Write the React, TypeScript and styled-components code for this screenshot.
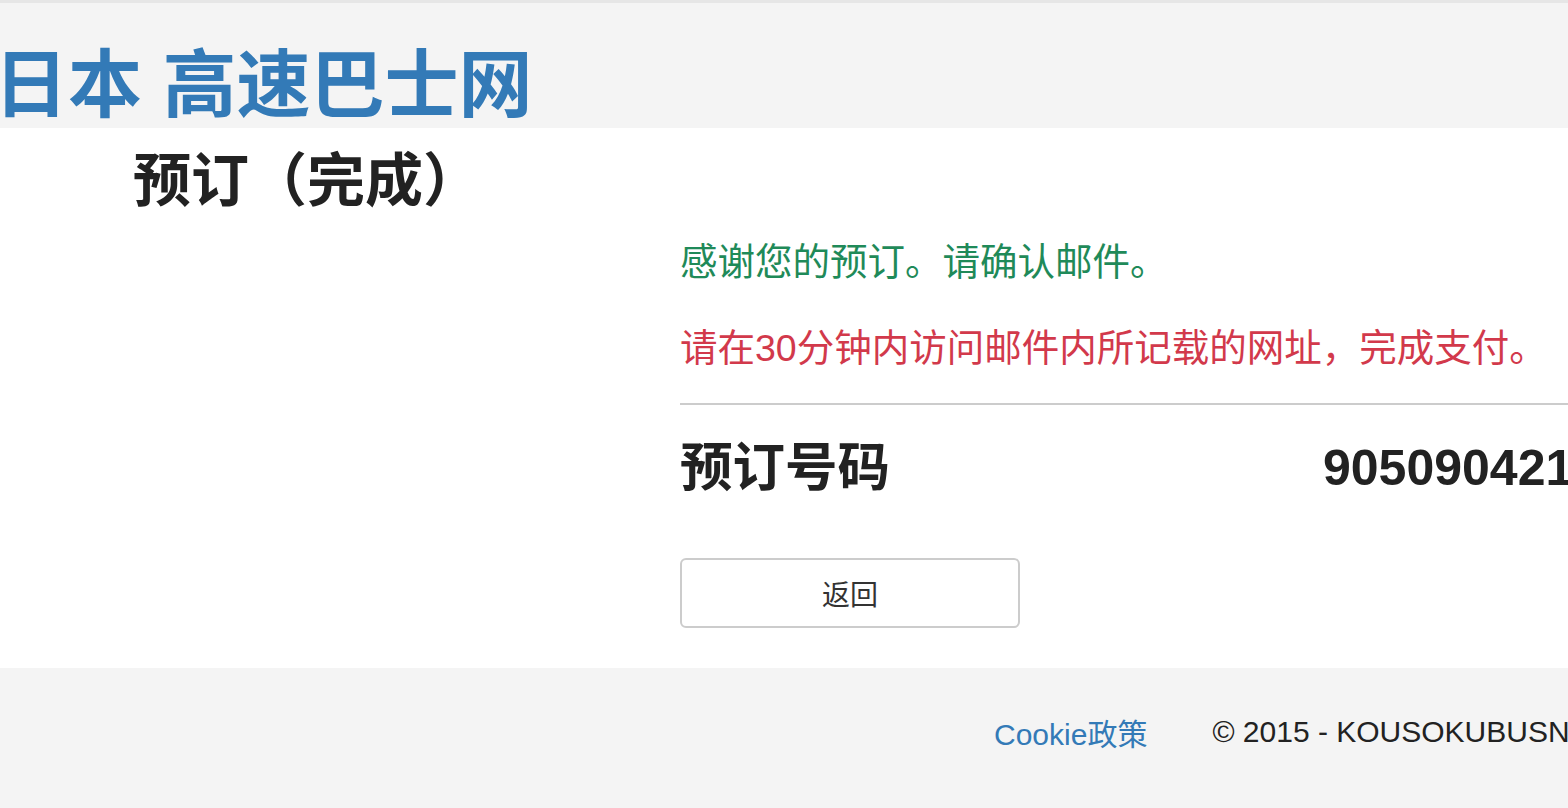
import React from "react";
import styled, { createGlobalStyle } from "styled-components";

const Global = createGlobalStyle`
  html, body {
    margin: 0;
    padding: 0;
    width: 1568px;
    height: 808px;
    overflow: hidden;
    background: #ffffff;
    font-family: "Liberation Sans", "Noto Sans CJK SC", sans-serif;
    color: #222222;
  }
  * { box-sizing: border-box; }
`;

const Page = styled.div`
  display: flex;
  flex-direction: column;
  width: 1568px;
  height: 808px;
  overflow: hidden;
`;

const Header = styled.header`
  height: 128px;
  background: #f4f4f4;
  border-top: 3px solid #e6e6e6;
  padding-top: 46px;
`;

const Brand = styled.h1`
  margin: 0 0 0 -6px;
  font-size: 74px;
  line-height: 74px;
  font-weight: 700;
  color: #337ab7;
  white-space: nowrap;
`;

const Main = styled.main`
  height: 540px;
  display: flex;
  flex-direction: column;
  padding-top: 24px;
`;

const PageTitle = styled.h2`
  margin: 0 0 0 133px;
  font-size: 58px;
  line-height: 58px;
  font-weight: 700;
  color: #222222;
  white-space: nowrap;
`;

const Content = styled.section`
  margin-left: 680px;
  width: 1000px;
  display: flex;
  flex-direction: column;
`;

const Message = styled.p<{ $tone: "success" | "danger" }>`
  margin: 0;
  font-size: 37.5px;
  line-height: 37.5px;
  white-space: nowrap;
  color: ${(p) => (p.$tone === "success" ? "#1f8a59" : "#d2394b")};
`;

const Divider = styled.hr`
  margin: 0;
  border: none;
  border-top: 2px solid #cccccc;
  height: 0;
`;

const InfoRow = styled.div`
  display: grid;
  grid-template-columns: 643px 1fr;
  align-items: center;
  white-space: nowrap;
`;

const InfoLabel = styled.div`
  font-size: 52.5px;
  line-height: 52.5px;
  font-weight: 700;
  color: #222222;
`;

const InfoValue = styled.div`
  font-size: 50px;
  line-height: 52.5px;
  font-weight: 700;
  color: #222222;
`;

const ButtonWrap = styled.div`
  margin-top: 63px;
`;

const BackButton = styled.button`
  width: 340px;
  height: 70px;
  background: #ffffff;
  border: 2px solid #cccccc;
  border-radius: 6px;
  font-family: "Liberation Sans", "Noto Sans CJK SC", sans-serif;
  font-size: 28px;
  color: #333333;
  cursor: pointer;
  padding: 0;
`;

const Footer = styled.footer`
  height: 140px;
  background: #f4f4f4;
  display: flex;
  align-items: center;
  padding-left: 994px;
  gap: 65px;
  white-space: nowrap;
  padding-bottom: 12px;
`;

const FooterLink = styled.a`
  font-size: 30px;
  color: #337ab7;
  text-decoration: none;
`;

const Copyright = styled.span`
  font-size: 30px;
  color: #222222;
`;

export default function App() {
  return (
    <>
      <Global />
      <Page>
        <Header>
          <Brand>日本 高速巴士网</Brand>
        </Header>
        <Main>
          <PageTitle>预订（完成）</PageTitle>
          <Content>
            <Message $tone="success" style={{ marginTop: 34 }}>
              感谢您的预订。请确认邮件。
            </Message>
            <Message $tone="danger" style={{ marginTop: 48 }}>
              请在30分钟内访问邮件内所记载的网址，完成支付。
            </Message>
            <Divider style={{ marginTop: 36 }} />
            <InfoRow style={{ marginTop: 37 }}>
              <InfoLabel>预订号码</InfoLabel>
              <InfoValue>905090421</InfoValue>
            </InfoRow>
            <ButtonWrap>
              <BackButton>返回</BackButton>
            </ButtonWrap>
          </Content>
        </Main>
        <Footer>
          <FooterLink href="#">Cookie政策</FooterLink>
          <Copyright>© 2015 - KOUSOKUBUSNET</Copyright>
        </Footer>
      </Page>
    </>
  );
}
